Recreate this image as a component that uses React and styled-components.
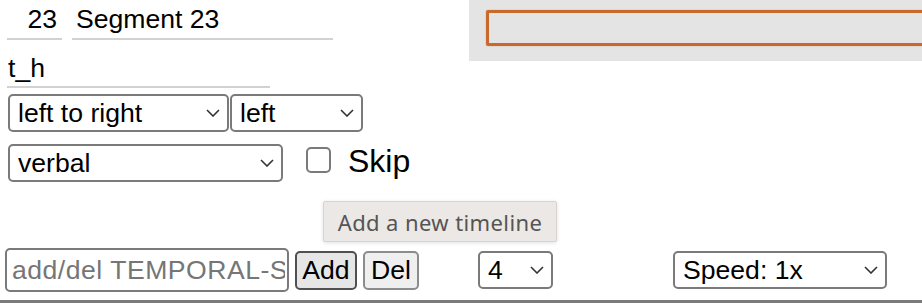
import React from 'react';
import styled, { createGlobalStyle } from 'styled-components';

const GlobalStyle = createGlobalStyle`
  html, body {
    margin: 0;
    padding: 0;
    background: #ffffff;
  }
  body {
    font-family: "Liberation Sans", Arial, sans-serif;
    color: #000;
  }
`

const Page = styled.div`
  position: relative;
  width: 922px;
  height: 308px;
  overflow: hidden;
`

const Top = styled.div`
  display: flex;
  align-items: flex-start;
`

const LeftPanel = styled.div`
  width: 469px;
  display: flex;
  flex-direction: column;
  padding-left: 7px;
  box-sizing: border-box;
`

const PreviewPanel = styled.div`
  flex: 1;
  height: 61px;
  background: #e4e4e4;
  padding: 10px 0 0 17px;
  box-sizing: border-box;
`

const TrackBox = styled.div`
  height: 36px;
  margin-right: -8px;
  border: 3px solid #c9692b;
  border-radius: 2px;
  box-shadow: 0 0 1px #c9692b;
  box-sizing: border-box;
`

const Row = styled.div`
  display: flex;
  align-items: center;
  margin-top: ${p => p.mt || 0}px;
`

const LineInput = styled.input`
  width: ${p => p.w}px;
  height: ${p => p.h || 40}px;
  margin-left: ${p => p.ml || 0}px;
  padding: ${p => p.pt || 0}px ${p => p.pr || 0}px 0 ${p => p.pl || 0}px;
  border: 0;
  border-bottom: 2px solid #d2d2d2;
  box-sizing: border-box;
  font-family: "Liberation Sans", Arial, sans-serif;
  font-size: 26.6px;
  color: #000;
  text-align: ${p => p.align || 'left'};
  background: transparent;
  outline: none;
`

const SelectWrap = styled.div`
  position: relative;
  display: inline-flex;
  width: ${p => p.w}px;
  margin-left: ${p => p.ml || 0}px;
`

const NativeSelect = styled.select`
  appearance: none;
  -webkit-appearance: none;
  width: 100%;
  height: 38px;
  padding: 0 30px 0 8px;
  border: 2px solid #7a7a7a;
  border-radius: 5px;
  background: #fff;
  box-sizing: border-box;
  font-family: "Liberation Sans", Arial, sans-serif;
  font-size: 26.6px;
  color: #000;
  outline: none;
`

const Chevron = styled.svg`
  position: absolute;
  right: 9px;
  top: 15px;
  width: 14px;
  height: 8px;
  pointer-events: none;
`

const Check = styled.input`
  appearance: none;
  -webkit-appearance: none;
  width: 25px;
  height: 26px;
  margin: 0 0 6px 23px;
  border: 2px solid #7a7a7a;
  border-radius: 5px;
  background: #fff;
  box-sizing: border-box;
`

const CheckLabel = styled.label`
  margin-left: 17px;
  margin-bottom: 4px;
  font-size: 32px;
  line-height: 38px;
`

const BottomBar = styled.div`
  display: flex;
  align-items: center;
  margin-top: 64px;
  padding: 0 0 8px 5px;
  border-bottom: 3px solid #7b7b7b;
`

const TextField = styled.input`
  width: 284px;
  height: 44px;
  padding: 0 2px 0 5px;
  border: 2px solid #7a7a7a;
  border-radius: 5px;
  box-sizing: border-box;
  font-family: "Liberation Sans", Arial, sans-serif;
  font-size: 26.6px;
  outline: none;
  &::placeholder {
    color: #767676;
    letter-spacing: 0.5px;
  }
`

const Button = styled.button`
  height: 39px;
  width: ${p => p.w}px;
  margin-left: 6px;
  padding: 0;
  border: 2px solid ${p => (p.active ? '#505050' : '#8c8c8c')};
  border-radius: 5px;
  background: ${p => (p.active ? '#e6e6e6' : '#efefef')};
  font-family: "Liberation Sans", Arial, sans-serif;
  font-size: 26.6px;
  color: #000;
  box-sizing: border-box;
`

const Tooltip = styled.div`
  position: absolute;
  left: 323px;
  top: 201px;
  width: 234px;
  height: 41px;
  box-sizing: border-box;
  display: flex;
  align-items: center;
  justify-content: center;
  background: #ebe8e6;
  border: 1px solid #d6d3d1;
  border-radius: 2px;
  box-shadow: 0 1px 4px rgba(0, 0, 0, 0.12);
  font-family: "Noto Sans", "Open Sans", sans-serif;
  font-size: 22px;
  letter-spacing: 0.4px;
  color: #555;
`

const Select = ({ w, ml, value, options }) => (
  <SelectWrap w={w} ml={ml}>
    <NativeSelect defaultValue={value}>
      {options.map(o => (
        <option key={o}>{o}</option>
      ))}
    </NativeSelect>
    <Chevron viewBox="0 0 14 8">
      <path d="M1 1 L7 7 L13 1" fill="none" stroke="#333" strokeWidth="1.6" />
    </Chevron>
  </SelectWrap>
)

export default function App() {
  return (
    <Page>
      <GlobalStyle />
      <Top>
        <LeftPanel>
          <Row>
            <LineInput w={55} pr={5} align="right" defaultValue="23" />
            <LineInput w={261} ml={10} pl={4} defaultValue="Segment 23" />
          </Row>
          <Row mt={6}>
            <LineInput w={263} h={42} pt={4} pl={1} defaultValue="t_h" />
          </Row>
          <Row mt={6}>
            <Select w={221} ml={1} value="left to right" options={['left to right', 'right to left']} />
            <Select w={133} ml={1} value="left" options={['left', 'right', 'center']} />
          </Row>
          <Row mt={10}>
            <Select w={275} ml={1} value="verbal" options={['verbal', 'non-verbal']} />
            <Check type="checkbox" id="skip" />
            <CheckLabel htmlFor="skip">Skip</CheckLabel>
          </Row>
        </LeftPanel>
        <PreviewPanel>
          <TrackBox />
        </PreviewPanel>
      </Top>

      <BottomBar>
        <TextField placeholder="add/del TEMPORAL-SEGMENT" />
        <Button w={62} active>Add</Button>
        <Button w={56}>Del</Button>
        <Select w={75} ml={59} value="4" options={['1', '2', '3', '4', '5']} />
        <Select w={214} ml={120} value="Speed: 1x" options={['Speed: 0.5x', 'Speed: 1x', 'Speed: 2x']} />
      </BottomBar>

      <Tooltip>Add a new timeline</Tooltip>
    </Page>
  );
}
